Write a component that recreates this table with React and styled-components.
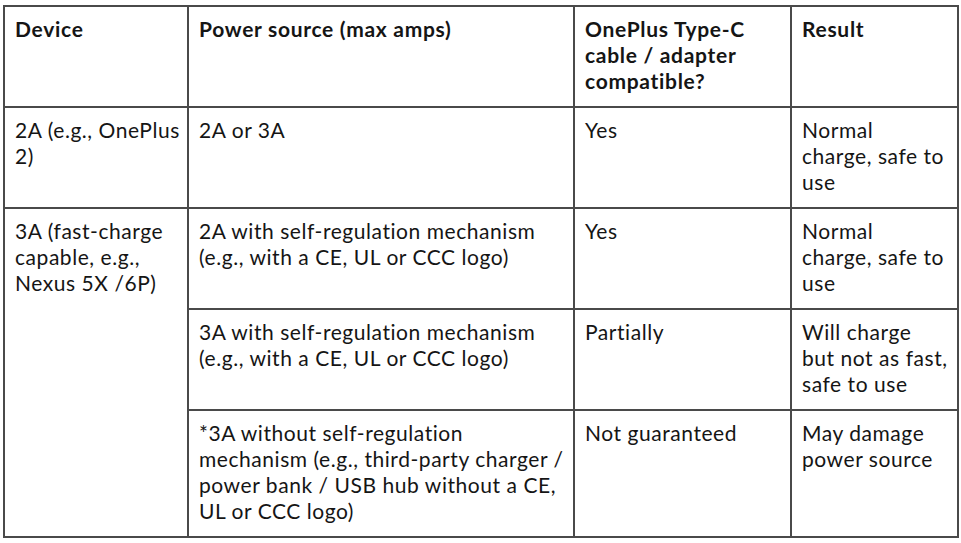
import styled, { createGlobalStyle } from "styled-components";

const GlobalStyle = createGlobalStyle`
  html, body {
    margin: 0;
    padding: 0;
    background: #ffffff;
  }
  body {
    font-family: Lato, "Liberation Sans", sans-serif;
    color: #151515;
  }
`;

const Page = styled.div`
  padding: 5px 0 0 3px;
`;

const Table = styled.table`
  border-collapse: collapse;
  table-layout: fixed;
  width: 954px;
  font-size: 21px;
  line-height: 26px;
`;

const Col = styled.col`
  width: ${({ $w }) => $w}px;
`;

const Cell = styled.td`
  border: 2px solid #4a4a4a;
  padding: 9px 6px 12px 10px;
  vertical-align: top;
  text-align: left;
  white-space: pre-line;
  font-weight: ${({ $head }) => ($head ? 700 : 400)};
  letter-spacing: ${({ $head }) => ($head ? "0.7px" : "0.55px")};
`;

const rows = [
  {
    device: { text: "2A (e.g., OnePlus 2)" },
    source: "2A or 3A",
    compat: "Yes",
    result: "Normal\ncharge, safe to use",
  },
  {
    device: { text: "3A (fast-charge capable, e.g., Nexus 5X /6P)", span: 3 },
    source: "2A with self-regulation mechanism (e.g., with a CE, UL or CCC logo)",
    compat: "Yes",
    result: "Normal\ncharge, safe to use",
  },
  {
    source: "3A with self-regulation mechanism (e.g., with a CE, UL or CCC logo)",
    compat: "Partially",
    result: "Will charge\nbut not as fast, safe to use",
  },
  {
    source:
      "*3A without self-regulation mechanism (e.g., third-party charger / power bank / USB hub without a CE, UL or CCC logo)",
    compat: "Not guaranteed",
    result: "May damage power source",
  },
];

export default function App() {
  return (
    <Page>
      <GlobalStyle />
      <Table>
        <colgroup>
          <Col $w={184} />
          <Col $w={386} />
          <Col $w={217} />
          <Col $w={167} />
        </colgroup>
        <thead>
          <tr>
            <Cell as="th" $head>Device</Cell>
            <Cell as="th" $head>Power source (max amps)</Cell>
            <Cell as="th" $head>OnePlus Type-C cable / adapter compatible?</Cell>
            <Cell as="th" $head>Result</Cell>
          </tr>
        </thead>
        <tbody>
          {rows.map((r, i) => (
            <tr key={i}>
              {r.device && <Cell rowSpan={r.device.span || 1}>{r.device.text}</Cell>}
              <Cell>{r.source}</Cell>
              <Cell>{r.compat}</Cell>
              <Cell>{r.result}</Cell>
            </tr>
          ))}
        </tbody>
      </Table>
    </Page>
  );
}
